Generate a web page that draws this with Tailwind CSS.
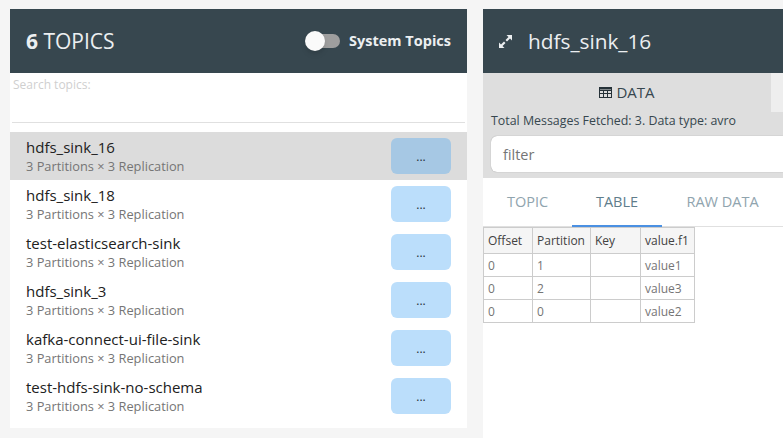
<!DOCTYPE html>
<html lang="en">
<head>
    <meta charset="UTF-8">
    <title>Topics</title>
    <script src="https://cdn.jsdelivr.net/npm/@tailwindcss/browser@4"></script>
</head>
<body class="bg-[#f5f5f5] h-[438px] w-[783px] overflow-hidden font-['Open_Sans',sans-serif]">
    <div class="flex pt-[9px] pl-[10px] gap-4 items-start">
        <!-- topics list -->
        <div class="w-[457px] bg-white h-[419px]">
            <div class="h-16 bg-[#37474f] flex items-center justify-between px-4">
                <div class="text-[21px] pt-[2px] text-[#eceff1]"><b class="font-bold">6</b> TOPICS</div>
                <div class="flex items-center gap-[9px]">
                    <div class="relative w-[30px] h-[14px] rounded-full bg-[#9e9e9e]">
                        <div class="absolute -left-[5px] -top-[3px] w-5 h-5 rounded-full bg-[#fafafa] shadow-md"></div>
                    </div>
                    <span class="text-[14.5px] font-bold text-[#eceff1]">System Topics</span>
                </div>
            </div>
            <div class="h-[59px] px-[2px] relative">
                <div class="text-xs text-[#cfcfcf] pt-[4px] pl-[1px] leading-4">Search topics:</div>
                <div class="absolute left-[2px] right-[2px] top-[49px] border-b border-[#e0e0e0]"></div>
            </div>
            <div class="flex items-center justify-between h-12 pl-4 pr-4 bg-[#dcdcdc]">
                <div class="pt-[2px]">
                    <div class="text-[15px] leading-[19px] text-[#212121]">hdfs_sink_16</div>
                    <div class="text-[12.800px] leading-[19px] text-[#757575]">3 Partitions × 3 Replication</div>
                </div>
                <button class="w-[60px] h-9 rounded-md bg-[#a6c8e4] text-xs pt-[2px] text-[#263238]">...</button>
            </div>
            <div class="flex items-center justify-between h-12 pl-4 pr-4">
                <div class="pt-[2px]">
                    <div class="text-[15px] leading-[19px] text-[#212121]">hdfs_sink_18</div>
                    <div class="text-[12.800px] leading-[19px] text-[#757575]">3 Partitions × 3 Replication</div>
                </div>
                <button class="w-[60px] h-9 rounded-md bg-[#bbdefb] text-xs pt-[2px] text-[#263238]">...</button>
            </div>
            <div class="flex items-center justify-between h-12 pl-4 pr-4">
                <div class="pt-[2px]">
                    <div class="text-[15px] leading-[19px] text-[#212121]">test-elasticsearch-sink</div>
                    <div class="text-[12.800px] leading-[19px] text-[#757575]">3 Partitions × 3 Replication</div>
                </div>
                <button class="w-[60px] h-9 rounded-md bg-[#bbdefb] text-xs pt-[2px] text-[#263238]">...</button>
            </div>
            <div class="flex items-center justify-between h-12 pl-4 pr-4">
                <div class="pt-[2px]">
                    <div class="text-[15px] leading-[19px] text-[#212121]">hdfs_sink_3</div>
                    <div class="text-[12.800px] leading-[19px] text-[#757575]">3 Partitions × 3 Replication</div>
                </div>
                <button class="w-[60px] h-9 rounded-md bg-[#bbdefb] text-xs pt-[2px] text-[#263238]">...</button>
            </div>
            <div class="flex items-center justify-between h-12 pl-4 pr-4">
                <div class="pt-[2px]">
                    <div class="text-[15px] leading-[19px] text-[#212121]">kafka-connect-ui-file-sink</div>
                    <div class="text-[12.800px] leading-[19px] text-[#757575]">3 Partitions × 3 Replication</div>
                </div>
                <button class="w-[60px] h-9 rounded-md bg-[#bbdefb] text-xs pt-[2px] text-[#263238]">...</button>
            </div>
            <div class="flex items-center justify-between h-12 pl-4 pr-4">
                <div class="pt-[2px]">
                    <div class="text-[15px] leading-[19px] text-[#212121]">test-hdfs-sink-no-schema</div>
                    <div class="text-[12.800px] leading-[19px] text-[#757575]">3 Partitions × 3 Replication</div>
                </div>
                <button class="w-[60px] h-9 rounded-md bg-[#bbdefb] text-xs pt-[2px] text-[#263238]">...</button>
            </div>
        </div>

        <!-- topic detail -->
        <div class="w-[300px] bg-white h-[429px] shrink-0">
            <div class="h-16 bg-[#37474f] flex items-center pl-4 gap-4">
                <svg class="w-[13px] h-[13px] mt-[1px]" viewBox="0 0 13 13" fill="#eceff1">
                    <path d="M7.500 0H13V5.500L11 3.500 8 6.500 6.500 5 9.500 2zM0 13V7.500L2 9.500 5 6.500 6.500 8 3.500 11 5.500 13z"/>
                </svg>
                <span class="text-[20.800px] pt-[2px] text-[#eceff1]">hdfs_sink_16</span>
            </div>
            <div class="bg-[#dedede] h-[105px]">
                <div class="flex h-[39px]">
                    <div class="w-[288px] flex items-center justify-center gap-[4px] text-[15px] text-[#37474f]">
                        <svg class="w-[13px] h-[11px]" viewBox="0 0 13 11" fill="none" stroke="#263238" stroke-width="1">
                            <rect x="0.500" y="0.500" width="12" height="10"/>
                            <path d="M0.500 3.500h12M0.500 6.500h12M4.500 3.500v7M8.500 3.500v7"/>
                            <path d="M0.500 1.500h12" stroke-width="2"/>
                        </svg>
                        DATA
                    </div>
                    <div class="flex-1 bg-[#eeeeee]"></div>
                </div>
                <div class="px-2 text-[12.400px] leading-4 text-[#37474f] pt-[1px]">Total Messages Fetched: 3. Data type: avro</div>
                <div class="ml-2 mt-[7px] h-9 bg-white rounded-l-md shadow-[0_0_1px_rgba(0,0,0,0.4)] pl-3 pt-[2px] flex items-center text-[14.500px] text-[#757575]">filter</div>
            </div>
            <div class="flex h-[47px] mt-[2px] border-b border-[#e0e0e0] text-[14.500px] text-center">
                <div class="w-[89px] leading-[44px] text-[#90a4ae]">TOPIC</div>
                <div class="w-[90px] leading-[44px] text-[#607d8b] border-b-2 border-[#4a90e2] h-[47px]">TABLE</div>
                <div class="w-[121px] leading-[44px] text-[#90a4ae]">RAW DATA</div>
            </div>
            <table class="border-collapse text-xs text-[#757575] leading-[17px]">
                <tr class="bg-[#f5f5f5] text-[#424242]">
                    <td class="border border-[#cccccc] px-1 py-[4px] w-[49px]">Offset</td>
                    <td class="border border-[#cccccc] px-1 py-[4px] w-[58px]">Partition</td>
                    <td class="border border-[#cccccc] px-1 py-[4px] w-[50px]">Key</td>
                    <td class="border border-[#cccccc] px-1 py-[4px] w-[54px]">value.f1</td>
                </tr>
                <tr>
                    <td class="border border-[#cccccc] px-1 py-[2.500px]">0</td>
                    <td class="border border-[#cccccc] px-1 py-[2.500px]">1</td>
                    <td class="border border-[#cccccc] px-1 py-[2.500px]"></td>
                    <td class="border border-[#cccccc] px-1 py-[2.500px]">value1</td>
                </tr>
                <tr>
                    <td class="border border-[#cccccc] px-1 py-[2.500px]">0</td>
                    <td class="border border-[#cccccc] px-1 py-[2.500px]">2</td>
                    <td class="border border-[#cccccc] px-1 py-[2.500px]"></td>
                    <td class="border border-[#cccccc] px-1 py-[2.500px]">value3</td>
                </tr>
                <tr>
                    <td class="border border-[#cccccc] px-1 py-[2.500px]">0</td>
                    <td class="border border-[#cccccc] px-1 py-[2.500px]">0</td>
                    <td class="border border-[#cccccc] px-1 py-[2.500px]"></td>
                    <td class="border border-[#cccccc] px-1 py-[2.500px]">value2</td>
                </tr>
            </table>
        </div>
    </div>
</body>
</html>
